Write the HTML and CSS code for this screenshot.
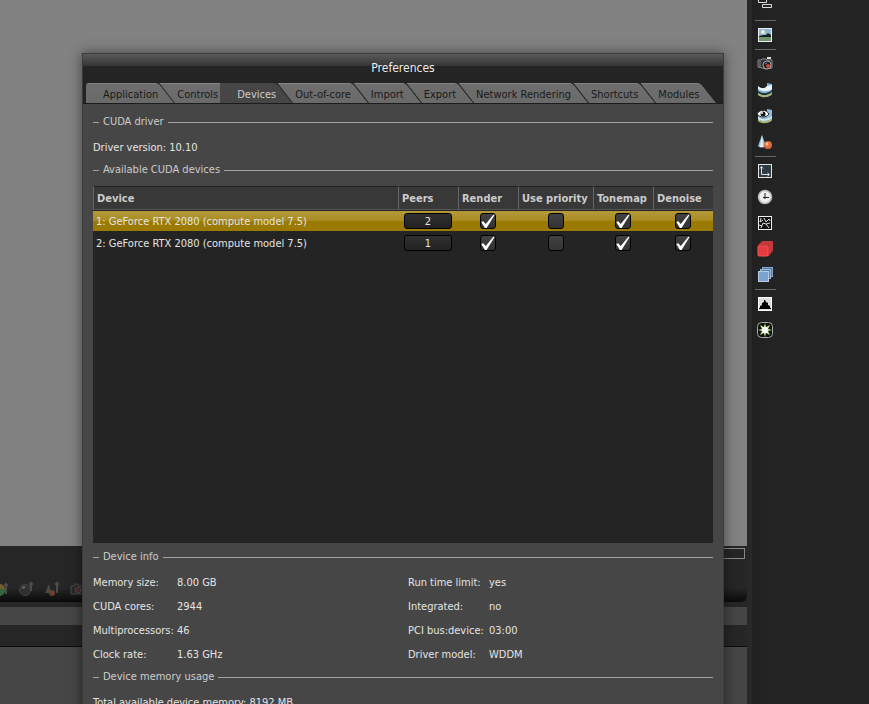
FILE: index.html
```
<!DOCTYPE html>
<html lang="en">
<head>
  <meta charset="UTF-8">
  <meta name="viewport" content="width=device-width, initial-scale=1.0">
  <title>Preferences</title>
  <link rel="stylesheet" href="styles.css">
</head>
<body>

  <!-- Main window behind the dialog -->
  <div class="workspace">
    <div class="viewport"></div>
    <div class="render-bar">
      <div class="progress"></div>
      <div class="tools">
        <svg width="16" height="16" viewBox="0 0 16 16"><circle cx="7" cy="9" r="6" fill="#7a5a30"/><path d="M7 3a6 6 0 0 1 6 5H7z" fill="#8a6a30"/><path d="M7 8h6a6 6 0 0 1-6 7z" fill="#357a4a"/><path d="M14 2v11M12 4h4" stroke="#555" stroke-width="2"/></svg>
        <svg width="16" height="16" viewBox="0 0 16 16"><circle cx="7" cy="9" r="5.500" fill="#333" stroke="#4c4c4c"/><path d="M4 7l3-1" stroke="#777" stroke-width="2"/><path d="M13 1v9M11 3h4" stroke="#555" stroke-width="2"/></svg>
        <svg width="16" height="16" viewBox="0 0 16 16"><path d="M5 3L1 12h6z" fill="#555"/><circle cx="8" cy="12" r="3" fill="#7d4a34"/><path d="M13 1v11M11 3h4" stroke="#555" stroke-width="2"/></svg>
        <svg width="16" height="16" viewBox="0 0 16 16"><path d="M1 5h3l1-2h3l1 2h4v8H1z" fill="#2a2a2a" stroke="#555"/><circle cx="8" cy="9" r="3" fill="#5a3030" stroke="#555"/></svg>
      </div>
    </div>
    <div class="strip"></div>
    <div class="panel-title"></div>
    <div class="panel"></div>
  </div>

  <!-- Right toolbar -->
  <div class="toolbar">
    <button class="tool hierarchy" aria-label="Hierarchy">
      <svg width="16" height="16" viewBox="0 0 16 16"><path d="M2.500 0v3" stroke="#ddd" fill="none"/><path d="M1.500 1.500h8v3h-8zM5.500 6.500h9v3h-9z" fill="#222" stroke="#ddd"/></svg>
    </button>
    <hr>
    <button class="tool" aria-label="Environment">
      <svg width="16" height="16" viewBox="0 0 16 16"><rect x="1.500" y="1.500" width="13" height="13" fill="#8fb6d4" stroke="#e8eef2"/><circle cx="6" cy="5" r="2" fill="#eef3c0"/><path d="M2 9l4-1 3 0 2-2 3 2v3H2z" fill="#14211f"/><path d="M2 10h12v4H2z" fill="#73946a"/></svg>
    </button>
    <hr>
    <button class="tool" aria-label="Camera">
      <svg width="16" height="16" viewBox="0 0 16 16"><path d="M1 4h3l1-1h4l1 1h5v8l-6 1-8-2z" fill="#333" stroke="#888"/><path d="M10 1h4v2h-4z" fill="#ddd"/><path d="M3 5v6" stroke="#888"/><circle cx="10" cy="9" r="4" fill="#191b22" stroke="#aaa"/><circle cx="11" cy="10" r="2" fill="#d0432c"/><path d="M8 8l2-1" stroke="#6b8fd0"/></svg>
    </button>
    <button class="tool" aria-label="Panorama">
      <svg width="16" height="16" viewBox="0 0 16 16"><path d="M1 4c3 3 7 3 9 0V1l5 1v10c-3 4-11 4-14 0z" fill="#7fb0d5"/><path d="M1 4c3 3 7 3 9 0l5-1v4c-4 3-10 3-14 0z" fill="#e9f4fa"/><path d="M1 9c4 3 10 3 14-1v2c-4 4-10 4-14 1z" fill="#1f3136"/><path d="M1 11c4 3 10 3 14-1v2c-3 4-11 4-14 1z" fill="#a5b774"/></svg>
    </button>
    <button class="tool" aria-label="Visible panorama">
      <svg width="16" height="16" viewBox="0 0 16 16"><path d="M1 6l9-2V1l5 1v10c-3 4-11 4-14 0z" fill="#8fbbd9"/><path d="M1 9c4 3 10 3 14-1v2c-4 3-10 4-14 1z" fill="#dcebf2"/><path d="M1 11c4 3 10 3 14-1v2c-3 4-11 4-14 1z" fill="#a5b774"/><path d="M0 6c3-5 9-5 12 0-3 4-9 4-12 0z" fill="#fff" stroke="#222"/><circle cx="6" cy="6" r="2.500" fill="#111"/><circle cx="5" cy="5" r="1" fill="#fff"/></svg>
    </button>
    <button class="tool" aria-label="Material">
      <svg width="16" height="16" viewBox="0 0 16 16"><path d="M5 1L1 12c2 2 6 2 8 0z" fill="#9fc0d6"/><path d="M5 1L3 13l3 0z" fill="#e6f1f7"/><circle cx="11" cy="11" r="4" fill="#e06a3c"/><circle cx="10" cy="10" r="1.500" fill="#ffc7a0"/></svg>
    </button>
    <hr>
    <button class="tool" aria-label="Resolution">
      <svg width="16" height="16" viewBox="0 0 16 16"><rect x="1.500" y="1.500" width="13" height="13" fill="#2c3c42" stroke="#e4e4e4"/><path d="M4.500 4v7.500H12M3 5.500l1.500-2 1.500 2M10.500 10l2 1.500-2 1.500" fill="none" stroke="#ddd"/></svg>
    </button>
    <button class="tool" aria-label="Animation">
      <svg width="16" height="16" viewBox="0 0 16 16"><circle cx="8" cy="8" r="6.500" fill="#eef0ee" stroke="#b8b8b8" stroke-width="1.500"/><path d="M8 4v6M6 8.500h6" stroke="#222" fill="none"/></svg>
    </button>
    <button class="tool" aria-label="Imager">
      <svg width="16" height="16" viewBox="0 0 16 16"><rect x="1.500" y="1.500" width="13" height="13" fill="#111" stroke="#eee"/><path d="M4 3L3 7l3-2M7 3l2 4 3-3 1 2M4 13l2-5 3 1 3 4M9 9l4-1M2 10l3 1" fill="none" stroke="#ddd"/></svg>
    </button>
    <button class="tool" aria-label="Render layer">
      <svg width="16" height="16" viewBox="0 0 16 16"><path d="M5 0h11v10l-4 5H1V4z" fill="#b8282b"/><path d="M5 1h10v9M3 3h10v9" fill="none" stroke="#d04a4c"/><rect x="1" y="5" width="10" height="10" rx="1" fill="#e8393d" stroke="#ee5c5f"/></svg>
    </button>
    <button class="tool" aria-label="Render passes">
      <svg width="16" height="16" viewBox="0 0 16 16"><rect x="5.500" y="0.500" width="10" height="9" fill="#4d78a8" stroke="#86a8ca"/><rect x="3.500" y="2.500" width="10" height="9" fill="#5583b5" stroke="#9dbbd8"/><rect x="1.500" y="4.500" width="10" height="10" fill="#7ba3cd" stroke="#b5cde4"/></svg>
    </button>
    <hr>
    <button class="tool" aria-label="Histogram">
      <svg width="16" height="16" viewBox="0 0 16 16"><rect x="1.500" y="1.500" width="13" height="13" fill="#ddd" stroke="#fff"/><path d="M2 12h1v-2l2-1V7l2-1V4h1l1 2 2 1v2l2 1v2h1v1H2z" fill="#000"/></svg>
    </button>
    <button class="tool" aria-label="Post processing">
      <svg width="16" height="16" viewBox="0 0 16 16"><rect x="0.500" y="0.500" width="15" height="15" rx="4" fill="#0d140a" stroke="#aaa"/><path d="M8 1l1 4 4-2-2 4 4 1-4 1 2 4-4-2-1 4-1-4-4 2 2-4-4-1 4-1-2-4 4 2z" fill="#d3ea9c"/><circle cx="8" cy="8" r="3" fill="#fff"/></svg>
    </button>
  </div>

  <!-- Preferences dialog -->
  <div class="dialog" role="dialog" aria-labelledby="title">
    <h1 class="title" id="title">Preferences</h1>
    <div class="tabs" role="tablist">
      <button class="tab first" role="tab">Application</button>
      <button class="tab before-active" role="tab">Controls</button>
      <button class="tab active" role="tab" aria-selected="true">Devices</button>
      <button class="tab" role="tab">Out-of-core</button>
      <button class="tab" role="tab">Import</button>
      <button class="tab" role="tab">Export</button>
      <button class="tab" role="tab">Network Rendering</button>
      <button class="tab" role="tab">Shortcuts</button>
      <button class="tab" role="tab">Modules</button>
    </div>

    <div class="content">
      <h2>CUDA driver</h2>
      <dl class="info">
        <dt>Driver version:</dt><dd>10.10</dd>
      </dl>

      <h2>Available CUDA devices</h2>
      <div class="device-list">
        <table>
          <thead>
            <tr>
              <th>Device</th>
              <th class="col">Peers</th>
              <th class="col">Render</th>
              <th class="col-wide">Use priority</th>
              <th class="col">Tonemap</th>
              <th class="col">Denoise</th>
            </tr>
          </thead>
          <tbody>
            <tr class="selected">
              <td>1: GeForce RTX 2080 (compute model 7.5)</td>
              <td><button class="peers">2</button></td>
              <td><input type="checkbox" aria-label="Render" checked></td>
              <td><input type="checkbox" aria-label="Use priority"></td>
              <td><input type="checkbox" aria-label="Tonemap" checked></td>
              <td><input type="checkbox" aria-label="Denoise" checked></td>
            </tr>
            <tr>
              <td>2: GeForce RTX 2080 (compute model 7.5)</td>
              <td><button class="peers">1</button></td>
              <td><input type="checkbox" aria-label="Render" checked></td>
              <td><input type="checkbox" aria-label="Use priority"></td>
              <td><input type="checkbox" aria-label="Tonemap" checked></td>
              <td><input type="checkbox" aria-label="Denoise" checked></td>
            </tr>
          </tbody>
        </table>
      </div>

      <h2>Device info</h2>
      <div class="columns">
        <dl class="info hardware">
          <dt>Memory size:</dt><dd>8.00 GB</dd>
          <dt>CUDA cores:</dt><dd>2944</dd>
          <dt>Multiprocessors:</dt><dd>46</dd>
          <dt>Clock rate:</dt><dd>1.63 GHz</dd>
        </dl>
        <dl class="info driver">
          <dt>Run time limit:</dt><dd>yes</dd>
          <dt>Integrated:</dt><dd>no</dd>
          <dt>PCI bus:device:</dt><dd>03:00</dd>
          <dt>Driver model:</dt><dd>WDDM</dd>
        </dl>
      </div>

      <h2>Device memory usage</h2>
      <dl class="info">
        <dt>Total available device memory:</dt><dd>8192 MB</dd>
      </dl>
    </div>
  </div>

</body>
</html>
```

FILE: styles.css
```
* {
  box-sizing: border-box;
}

body {
  margin: 0;
  height: 100vh;
  display: flex;
  overflow: hidden;
  position: relative;
  background-color: #262626;
  color: #e4e4e4;
  font-family: "DejaVu Sans Condensed", "DejaVu Sans", sans-serif;
  font-size: 11px;
}

button {
  font: inherit;
  color: inherit;
  border: none;
  padding: 0;
  background: none;
}

/* Main window */
.workspace {
  flex: 1;
  display: flex;
  flex-direction: column;
}

.viewport {
  flex: 1;
  background-color: #828282;
}

.render-bar {
  height: 56px;
  padding-top: 2px;
  display: flex;
  flex-direction: column;
  justify-content: space-between;
  margin-bottom: 5px;
}

.progress {
  height: 11px;
  margin-right: 2px;
  margin-left: 100px;
  border: 1px solid #8a8a8a;
}

.tools {
  height: 20px;
  padding-left: 18px;
  display: flex;
  gap: 10px;
  border-radius: 0 0 6px 0;
  background: linear-gradient(#262626 6px, #0a0a0a);
}

.tools svg {
  margin-top: -1px;
  opacity: 0.8;
}

.tools svg:first-child {
  margin-left: -26px;
}

.strip {
  height: 18px;
  background-color: #464646;
}

.panel-title {
  height: 22px;
  border-bottom: 1px solid #0c0c0c;
}

.panel {
  height: 57px;
  background-color: #464646;
}

/* Right toolbar */
.toolbar {
  width: 122px;
  padding-left: 5px;
  border-left: 5px solid #282828;
  display: flex;
  flex-direction: column;
  align-items: flex-start;
  background: linear-gradient(90deg, #202020, #242424 24px);
}

.toolbar hr {
  width: 21px;
  margin: 1px 0 1px -2px;
  border: none;
  border-top: 1px solid #666;
}

.tool {
  height: 26px;
  display: flex;
  align-items: center;
}

.tool.hierarchy {
  margin-top: -7px;
}

/* Dialog */
.dialog {
  position: absolute;
  top: 53px;
  left: 82px;
  right: 145px;
  border: 1px solid #3c3c3c;
  background-color: #464646;
  box-shadow: 0 0 12px rgba(0, 0, 0, 0.5);
}

.title {
  height: 29px;
  margin: 0;
  font-size: 12px;
  font-weight: normal;
  line-height: 28px;
  text-align: center;
  color: #eee;
  background: linear-gradient(#5a5a5a, #353535 12px, #242424 12px);
}

.tabs {
  display: flex;
  height: 21px;
  padding-left: 3px;
  overflow: hidden;
  background-color: #242424;
  border-bottom: 1px solid #1c1c1c;
}

/* Slanted tabs, the slope is drawn by a skewed box behind the text */
.tab {
  position: relative;
  z-index: 0;
  height: 20px;
  padding: 2px 18px 0 2px;
  color: #1a1a1a;
  white-space: nowrap;
}

.tab::before {
  content: "";
  position: absolute;
  z-index: -1;
  inset: 0;
  background: linear-gradient(#858585 1px, #6e6e6e 1px, #6a6a6a);
  border-right: 1px solid #2c2c2c;
  border-top-right-radius: 4px;
  transform: skewX(38deg);
  transform-origin: bottom;
}

.tab.first {
  padding-left: 17px;
  padding-right: 17px;
}

.tab.first,
.tab.before-active {
  background: linear-gradient(#858585 1px, #6e6e6e 1px, #6a6a6a) no-repeat;
}

.tab.first {
  background-size: 40px 100%;
  border-top-left-radius: 3px;
}

.tab.first::before {
  left: 18px;
}

.tab.before-active {
  padding-right: 2px;
  background-position: right;
  background-size: 28px 100%;
}

.tab.before-active::before {
  right: 12px;
  border-right: none;
  border-radius: 0;
}

.tab.active {
  padding-left: 17px;
  padding-right: 17px;
  color: #ccc;
  background: linear-gradient(#464646, #464646) no-repeat;
  background-size: 40px 100%;
}

.tab.active::before {
  left: 18px;
  background: #464646;
}

.content {
  padding: 7px 10px 0;
}

h2 {
  display: flex;
  align-items: center;
  gap: 4px;
  height: 20px;
  margin: 0;
  font-size: 11px;
  font-weight: normal;
  color: #ccc;
}

h2::before,
h2::after {
  content: "";
  width: 6px;
  height: 1px;
  margin-top: 2px;
  background-color: #a0a0a0;
}

h2::after {
  flex: 1;
}

.info {
  display: grid;
  grid-template-columns: max-content 1fr;
  column-gap: 3px;
  margin: 0 0 -1px;
  padding-top: 5px;
  line-height: 24px;
}

.info dd {
  margin: 0;
}

.columns {
  display: grid;
  grid-template-columns: 1fr 1fr;
  gap: 10px;
}

.info.hardware {
  grid-template-columns: 84px 1fr;
  column-gap: 0;
}

.info.driver {
  grid-template-columns: 81px 1fr;
  column-gap: 0;
}

/* Device table */
.device-list {
  height: 357px;
  margin: 7px 0 3px;
  background-color: #242424;
}

table {
  width: 100%;
  table-layout: fixed;
  border-collapse: separate;
  border-spacing: 0;
}

th {
  height: 24px;
  padding: 0 3px;
  text-align: left;
  color: #ccc;
  white-space: nowrap;
  background-color: #383838;
  border-left: 1px solid #666;
  border-top: 1px solid #222;
  border-bottom: 1px solid #555;
}

.col {
  width: 60px;
}

.col-wide {
  width: 75px;
}

td {
  height: 22px;
  padding: 0;
  text-align: center;
  border-top: 1px solid #242424;
  border-bottom: 1px solid #242424;
}

td:first-child {
  padding-left: 3px;
  text-align: left;
}

.selected td {
  background: linear-gradient(#b49a3a, #a88a20 10px, #9a7a00 10px);
}

.peers {
  display: block;
  width: 48px;
  height: 16px;
  margin: 0 auto;
  border: 1px solid #000;
  border-radius: 3px;
  background: linear-gradient(#303030, #222);
  line-height: 15px;
}

input[type="checkbox"] {
  appearance: none;
  display: block;
  width: 16px;
  height: 16px;
  margin: 0 auto;
  border: 1px solid #000;
  border-radius: 3px;
  background: linear-gradient(#424242, #333);
}

input[type="checkbox"]:checked::before {
  content: "";
  display: block;
  width: 14px;
  height: 14px;
  background-color: #fff;
  clip-path: polygon(2% 58%, 16% 52%, 34% 72%, 88% 6%, 98% 6%, 40% 100%, 28% 100%);
}
```
